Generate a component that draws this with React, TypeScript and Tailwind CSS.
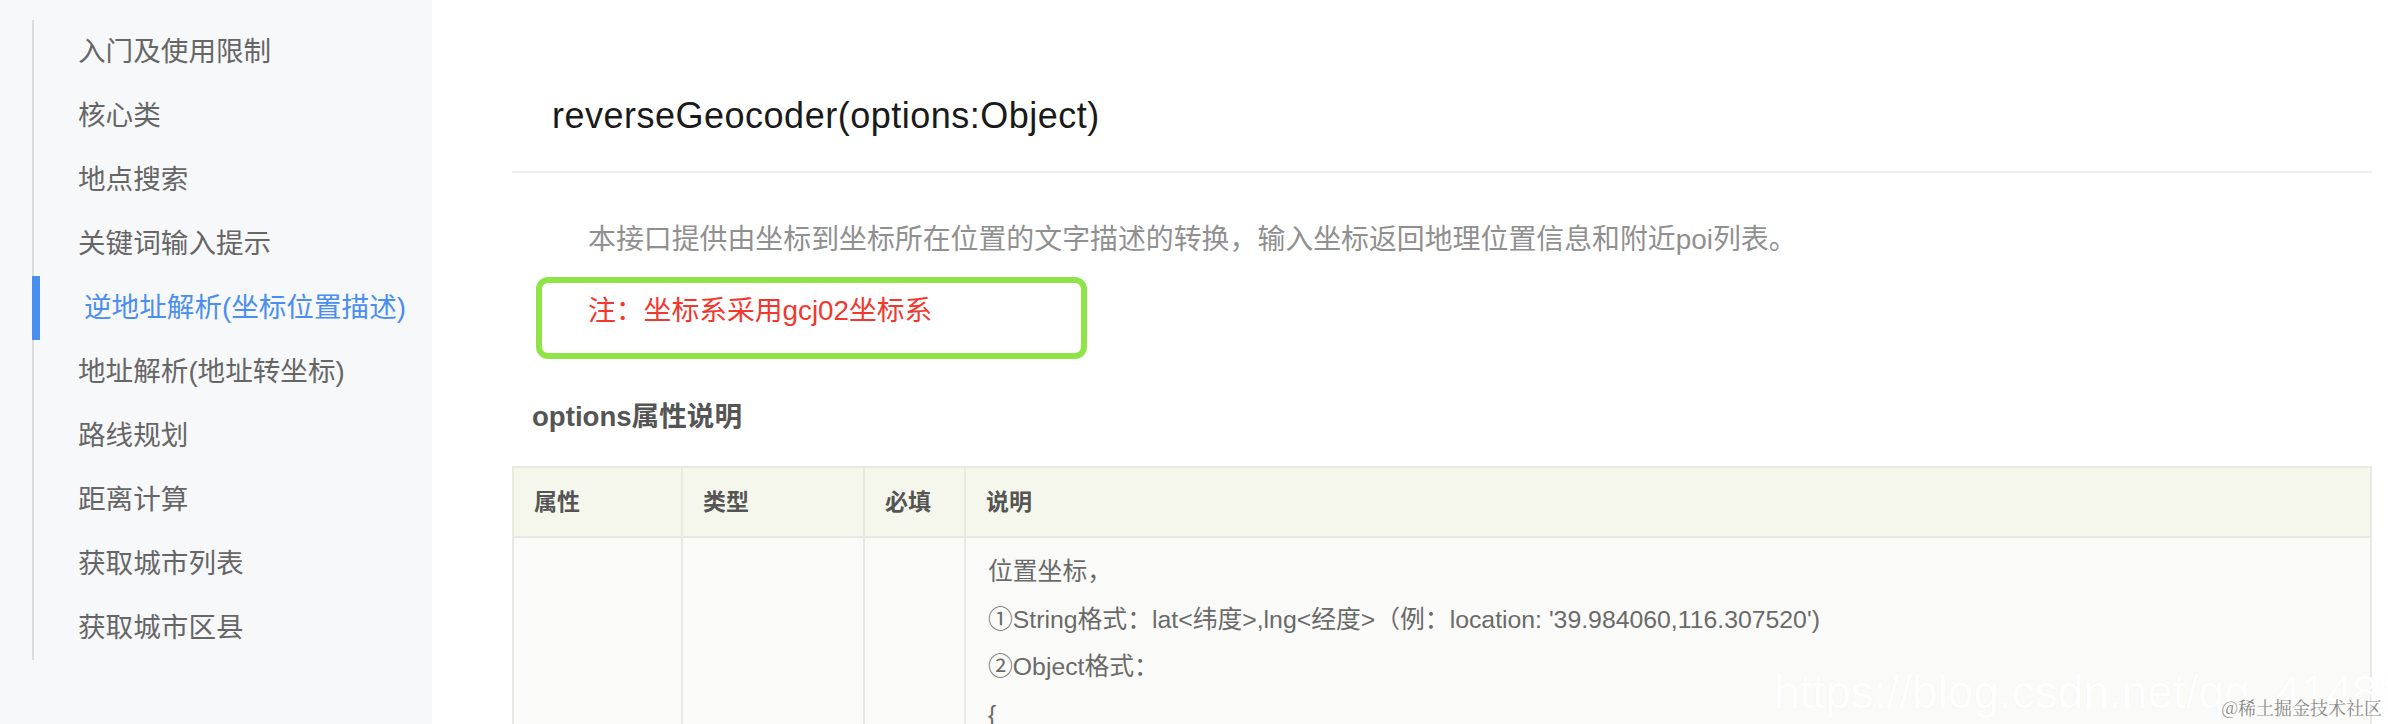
import React from 'react'

const menu = [
    '入门及使用限制',
    '核心类',
    '地点搜索',
    '关键词输入提示',
    '逆地址解析(坐标位置描述)',
    '地址解析(地址转坐标)',
    '路线规划',
    '距离计算',
    '获取城市列表',
    '获取城市区县',
]
const activeIndex = 4

const font = 'font-["Liberation_Sans","Noto_Sans_CJK_SC",sans-serif]'

const Sidebar = () => {
    return (
        <aside className="w-[432px] shrink-0 bg-[#f7f8fa] pt-[20px] pl-[32px]">
            <ul className="border-l-2 border-[#dcdcdc]">
                {menu.map((item, i) => (
                    <li key={item} className="relative flex h-[64px] items-center">
                        {i === activeIndex && (
                            <span className="absolute -left-[2px] top-0 h-full w-[8px] bg-[#4a8ef0]"></span>
                        )}
                        <span
                            className={
                                i === activeIndex
                                    ? 'pl-[50px] text-[27.6px] leading-[40px] text-[#4a8ef0]'
                                    : 'pl-[44px] text-[27.6px] leading-[40px] text-[#666]'
                            }
                        >
                            {item}
                        </span>
                    </li>
                ))}
            </ul>
        </aside>
    )
}

const OptionsTable = () => {
    return (
        <table className="mt-[29px] w-full border-collapse border-2 border-[#e8e9e1]">
            <thead>
                <tr className="h-[70px] bg-[#f5f7ec]">
                    <th className="w-[169px] border-2 border-[#e8e9e1] pl-[20px] text-left text-[23px] font-bold text-[#555]">属性</th>
                    <th className="w-[182px] border-2 border-[#e8e9e1] pl-[20px] text-left text-[23px] font-bold text-[#555]">类型</th>
                    <th className="w-[101px] border-2 border-[#e8e9e1] pl-[20px] text-left text-[23px] font-bold text-[#555]">必填</th>
                    <th className="border-2 border-[#e8e9e1] pl-[20px] text-left text-[23px] font-bold text-[#555]">说明</th>
                </tr>
            </thead>
            <tbody>
                <tr className="h-[200px] bg-[#fafaf8] align-top">
                    <td className="border-2 border-[#e8e9e1]"></td>
                    <td className="border-2 border-[#e8e9e1]"></td>
                    <td className="border-2 border-[#e8e9e1]"></td>
                    <td className="border-2 border-[#e8e9e1] pl-[22px] pt-[10px] text-[24.8px] leading-[47.5px] text-[#6a6a6a]">
                        <p>位置坐标，</p>
                        <p>①String格式：lat&lt;纬度&gt;,lng&lt;经度&gt;（例：location: '39.984060,116.307520')</p>
                        <p>②Object格式：</p>
                        <p>{'{'}</p>
                    </td>
                </tr>
            </tbody>
        </table>
    )
}

export default function App() {
    return (
        <div className={`flex h-[724px] w-[2388px] overflow-hidden bg-white ${font}`}>
            <Sidebar />
            <main className="relative flex-1 pl-[80px] pr-[16px]">
                <h1 className="pl-[40px] pt-[92px] text-[36px] leading-[48px] tracking-[0.5px] text-[#1a1a1a]">
                    reverseGeocoder(options:Object)
                </h1>
                <div className="mt-[31px] h-[2px] bg-[#efefef]"></div>
                <p className="mt-[47px] pl-[76px] text-[27.9px] leading-[40px] text-[#909090]">
                    本接口提供由坐标到坐标所在位置的文字描述的转换，输入坐标返回地理位置信息和附近poi列表。
                </p>
                <div className="relative mt-[31px]">
                    <p className="pl-[76px] text-[27.8px] leading-[40px] text-[#f2372e]">注：坐标系采用gcj02坐标系</p>
                    <div className="absolute left-[24px] top-[-14px] h-[82px] w-[551px] rounded-[12px] border-[6px] border-[#8fe448]"></div>
                </div>
                <h2 className="mt-[66px] pl-[20px] text-[27.6px] font-bold leading-[40px] text-[#555]">options属性说明</h2>
                <OptionsTable />
                <span className="pointer-events-none absolute left-[1342px] top-[664px] whitespace-nowrap text-[46px] leading-[56px] text-white [text-shadow:0_0_1px_rgba(0,0,0,0.05)]">
                    https://blog.csdn.net/qq_41485414
                </span>
                <span className='pointer-events-none absolute right-[6px] top-[694px] whitespace-nowrap font-["Noto_Serif_CJK_SC","Noto_Sans_CJK_SC",serif] text-[18px] leading-[26px] text-[#8a8a8a]'>
                    @稀土掘金技术社区
                </span>
            </main>
        </div>
    )
}
